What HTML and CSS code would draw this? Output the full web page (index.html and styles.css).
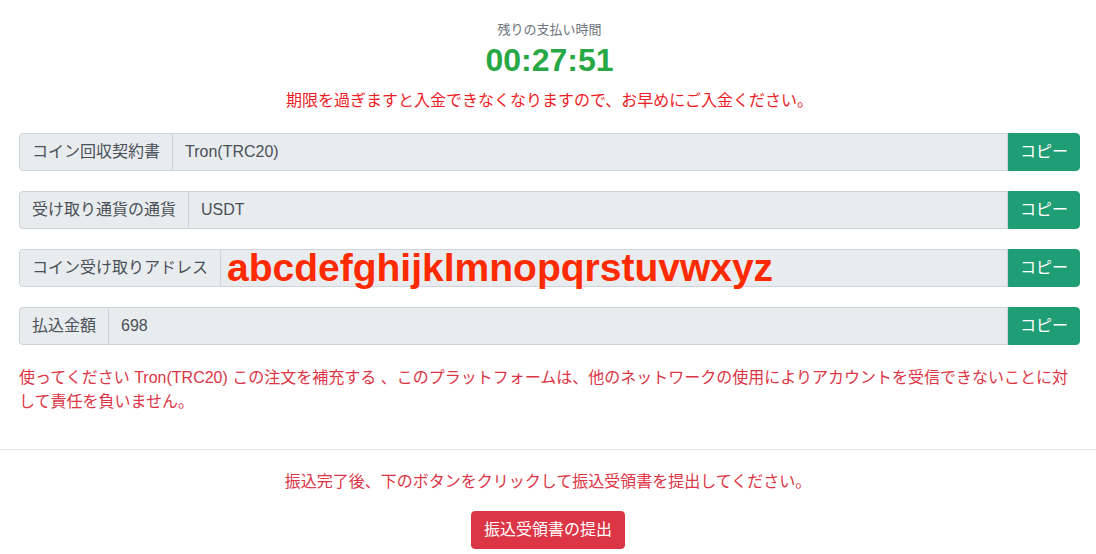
FILE: index.html
```html
<!DOCTYPE html>
<html lang="ja">
<head>
<meta charset="utf-8">
<title>支払い</title>
<link rel="stylesheet" href="styles.css">
</head>
<body>
<div class="page">
  <div class="container">
    <div class="header">
      <p class="subtitle">残りの支払い時間</p>
      <div class="timer">00:27:51</div>
      <p class="warning">期限を過ぎますと入金できなくなりますので、お早めにご入金ください。</p>
    </div>

    <div class="input-group">
      <div class="label">コイン回収契約書</div>
      <div class="value">Tron(TRC20)</div>
      <button class="copy">コピー</button>
    </div>
    <div class="input-group">
      <div class="label">受け取り通貨の通貨</div>
      <div class="value">USDT</div>
      <button class="copy">コピー</button>
    </div>
    <div class="input-group">
      <div class="label">コイン受け取りアドレス</div>
      <div class="value value-address"><span class="address">abcdefghijklmnopqrstuvwxyz</span></div>
      <button class="copy">コピー</button>
    </div>
    <div class="input-group">
      <div class="label">払込金額</div>
      <div class="value">698</div>
      <button class="copy">コピー</button>
    </div>

    <p class="notice">使ってください Tron(TRC20) この注文を補充する 、このプラットフォームは、他のネットワークの使用によりアカウントを受信できないことに対して責任を負いません。</p>
  </div>

  <hr class="divider">

  <div class="footer">
    <p class="footer-text">振込完了後、下のボタンをクリックして振込受領書を提出してください。</p>
    <button class="submit">振込受領書の提出</button>
  </div>
</div>
</body>
</html>
```
FILE: styles.css
```css
* {
  box-sizing: border-box;
}

html, body {
  margin: 0;
  padding: 0;
  background: #ffffff;
}

body {
  font-family: "Liberation Sans", "Noto Sans CJK JP", sans-serif;
  font-size: 16px;
  line-height: 24px;
  color: #212529;
}

.container {
  padding: 0 16px 0 19px;
}

.header {
  padding-top: 20px;
  text-align: center;
}

.subtitle {
  margin: 0;
  font-size: 13px;
  line-height: 20px;
  color: #6c757d;
}

.timer {
  margin-top: 1px;
  font-size: 32px;
  line-height: 38px;
  font-weight: 700;
  color: #28a745;
}

.warning {
  margin: 10px 0 0;
  font-size: 16px;
  line-height: 24px;
  color: #ee1c25;
}

.input-group {
  display: flex;
  align-items: stretch;
  margin-top: 20px;
  height: 38px;
}

.label {
  flex: none;
  padding: 6px 12px;
  background: #e9ecef;
  border: 1px solid #ced4da;
  border-radius: 4px 0 0 4px;
  color: #495057;
  white-space: nowrap;
}

.value {
  flex: 1;
  padding: 6px 12px;
  background: #e9ecef;
  border: 1px solid #ced4da;
  border-left: none;
  color: #495057;
  white-space: nowrap;
  overflow: visible;
}

.value-address {
  padding-left: 6px;
}

.address {
  font-size: 39px;
  font-weight: 700;
  color: #ff2a00;
}

.copy {
  flex: none;
  width: 72px;
  margin: 0;
  padding: 6px 0;
  border: 1px solid #1f9d74;
  border-radius: 0 4px 4px 0;
  background: #1f9d74;
  color: #ffffff;
  font-family: inherit;
  font-size: 16px;
  line-height: 24px;
  white-space: nowrap;
  text-align: center;
}

.notice {
  margin: 21px 0 0;
  color: #dc3545;
  font-size: 16px;
  line-height: 24px;
}

.divider {
  margin: 35px 0 0;
  border: 0;
  border-top: 1px solid #e3e5e8;
  height: 0;
}

.footer {
  text-align: center;
  padding-top: 20px;
}

.footer-text {
  margin: 0;
  font-size: 16px;
  line-height: 24px;
  color: #dc3545;
}

.submit {
  margin-top: 17px;
  padding: 6px 12px;
  border: 1px solid #dc3545;
  border-radius: 4px;
  background: #dc3545;
  color: #ffffff;
  font-family: inherit;
  font-size: 16px;
  line-height: 24px;
}
```
